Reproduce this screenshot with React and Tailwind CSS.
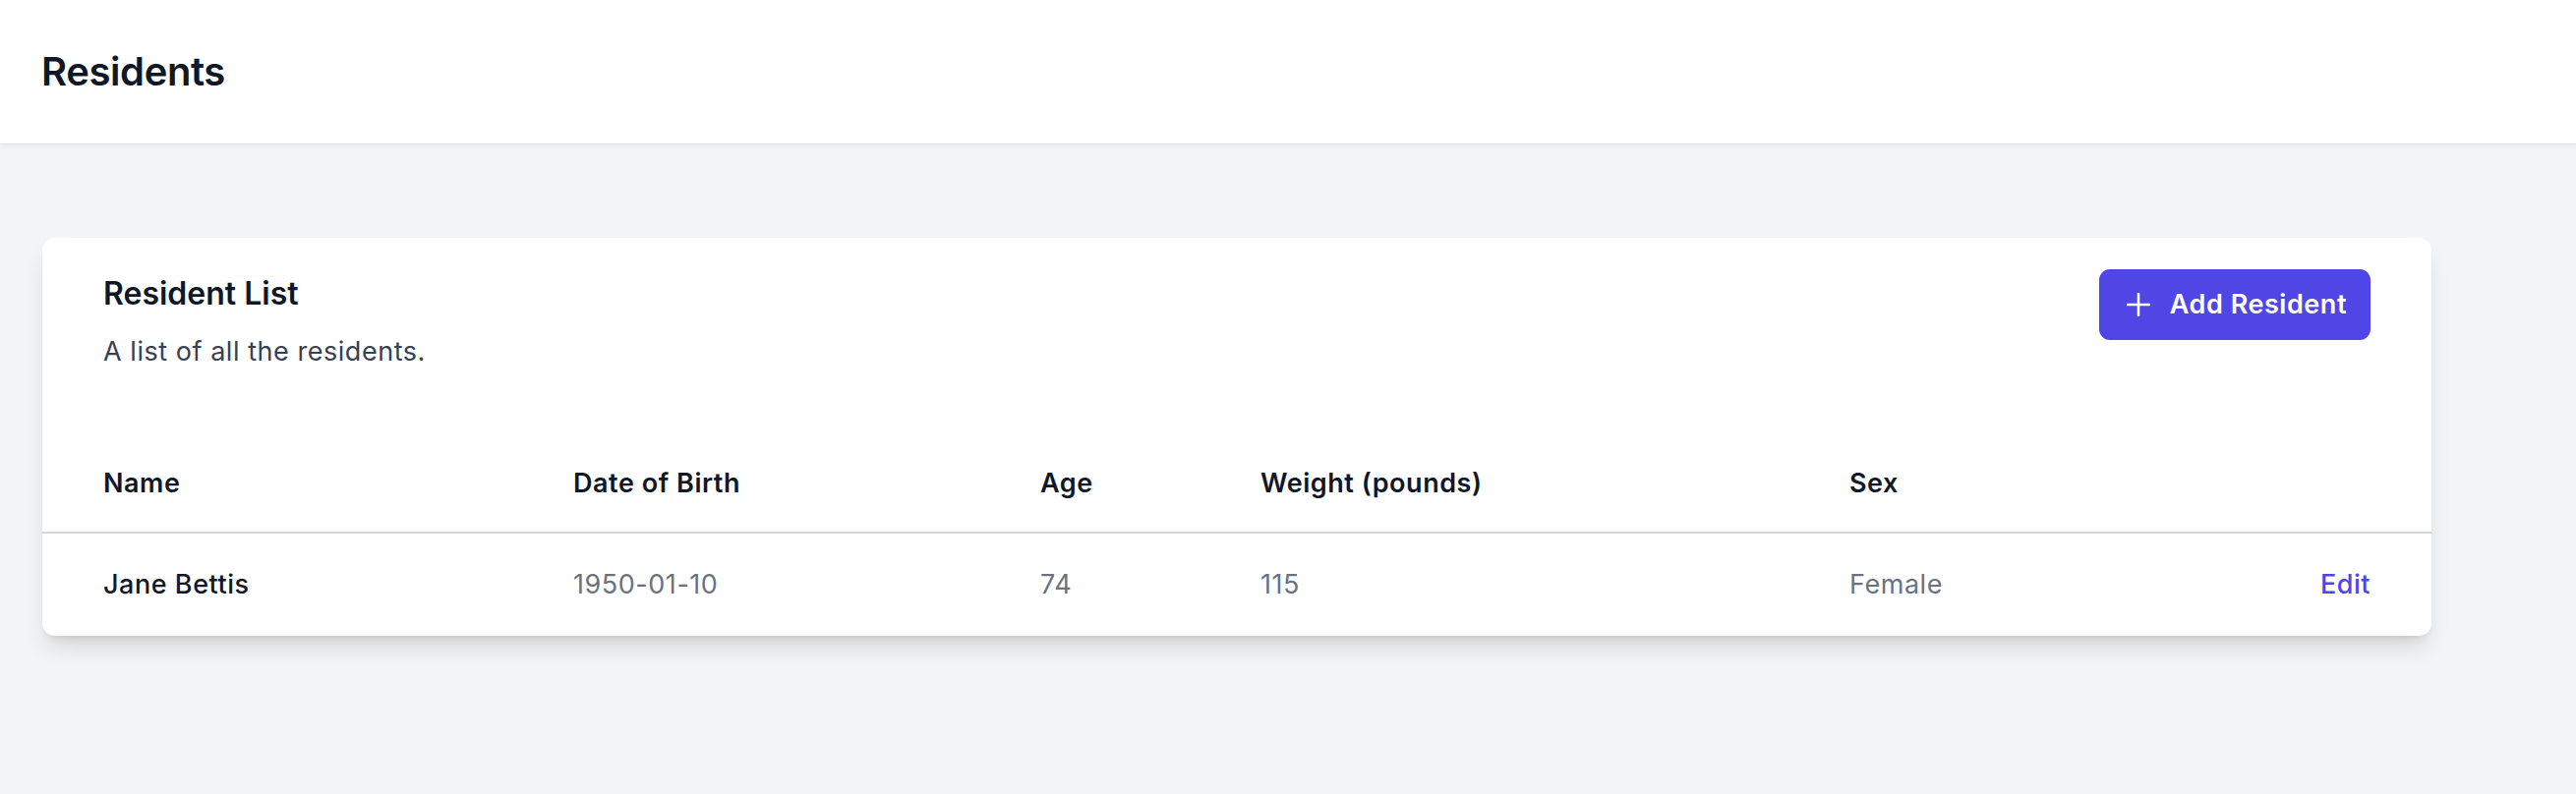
import { useState } from "react";

const residents = [
  { id: 1, name: "Jane Bettis", dob: "1950-01-10", age: 74, weight: 115, sex: "Female" },
];

const cols = "grid grid-cols-[478px_475px_224px_599px_1fr_auto] items-center";

function PlusIcon() {
  return (
    <svg viewBox="0 0 24 24" className="w-[24px] h-[24px]" fill="none" stroke="currentColor" strokeWidth="2.6" strokeLinecap="round">
      <path d="M12 1v22M1 12h22" />
    </svg>
  );
}

export default function App() {
  const [rows] = useState(residents);

  return (
    <div className="min-h-screen bg-gray-100 font-['Inter','Liberation_Sans',sans-serif] antialiased">

      {/* Top bar */}
      <header className="h-[147px] bg-white border-b border-gray-200 shadow-[0_2px_4px_rgba(0,0,0,0.05)] flex items-center px-[42px]">
        <h1 className="text-[40px] leading-[56px] font-semibold tracking-[-0.01em] text-gray-900">Residents</h1>
      </header>

      <main className="pt-[95px] pl-[43px]">
        <div className="w-[2430px] bg-white rounded-[13px] shadow-[0_16px_25px_-5px_rgba(0,0,0,0.12),0_7px_10px_-6px_rgba(0,0,0,0.12)]">

          {/* Card header */}
          <div className="flex items-start justify-between px-[62px] pt-[32px]">
            <div className="pt-[3px]">
              <h2 className="text-[32px] leading-[44px] font-semibold text-gray-900">Resident List</h2>
              <p className="mt-[17px] text-[27px] leading-[40px] tracking-[0.02em] text-gray-700">A list of all the residents.</p>
            </div>
            <button className="h-[72px] flex items-center gap-[20px] pl-[28px] pr-[24px] rounded-[11px] bg-[#4f46e5] text-white text-[27px] font-semibold tracking-[0.02em] hover:bg-[#6366f1]">
              <PlusIcon />
              Add Resident
            </button>
          </div>

          {/* Table head */}
          <div className={`${cols} mt-[64px] px-[62px] pt-[30px] pb-[29px] border-b-2 border-gray-300 text-[27px] leading-[40px] tracking-[0.02em] font-semibold text-gray-900`}>
            <div>Name</div>
            <div>Date of Birth</div>
            <div>Age</div>
            <div>Weight (pounds)</div>
            <div>Sex</div>
            <div />
          </div>

          {/* Rows */}
          {rows.map((r) => (
            <div key={r.id} className={`${cols} px-[62px] pt-[32px] pb-[32px] text-[27px] leading-[40px] tracking-[0.02em]`}>
              <div className="font-medium text-gray-900">{r.name}</div>
              <div className="text-gray-500">{r.dob}</div>
              <div className="text-gray-500">{r.age}</div>
              <div className="text-gray-500">{r.weight}</div>
              <div className="text-gray-500">{r.sex}</div>
              <div className="text-right">
                <a href="#" className="font-medium text-[#4f46e5] hover:text-[#312e81]">Edit</a>
              </div>
            </div>
          ))}
        </div>
      </main>
    </div>
  );
}
